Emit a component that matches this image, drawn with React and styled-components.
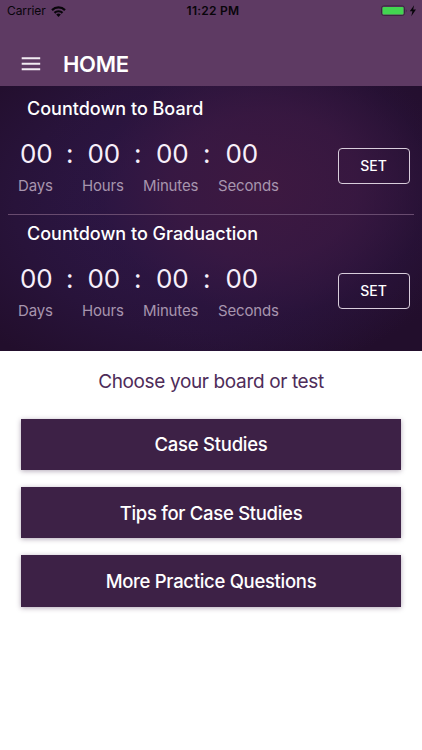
import styled, { createGlobalStyle } from "styled-components";

const units = ["Days", "Hours", "Minutes", "Seconds"];

function Countdown({ title }) {
  return (
    <CountdownBox>
      <CountdownTitle>{title}</CountdownTitle>
      <CountdownBody>
        <div>
          <Digits>
            <span>00</span>
            <Colon>:</Colon>
            <span>00</span>
            <Colon>:</Colon>
            <span>00</span>
            <Colon>:</Colon>
            <span>00</span>
          </Digits>
          <Labels>
            {units.map((unit) => (
              <span key={unit}>{unit}</span>
            ))}
          </Labels>
        </div>
        <SetButton>SET</SetButton>
      </CountdownBody>
    </CountdownBox>
  );
}

function App() {
  return (
    <>
      <GlobalStyle />
      <Container>
        <Header>
          <StatusBar>
            <Carrier>
              Carrier
              <svg width="15" height="11" viewBox="0 0 15 11">
                <g fill="none" stroke="#08050a" strokeWidth="2.2">
                  <path d="M1 4.1a9.3 9.3 0 0 1 13 0" />
                  <path d="M3.5 6.9a5.7 5.7 0 0 1 8 0" />
                </g>
                <path d="M5.2 8.6a3.3 3.3 0 0 1 4.6 0L7.5 10.9z" fill="#08050a" />
              </svg>
            </Carrier>
            <Time>11:22 PM</Time>
            <Battery>
              <svg width="36" height="12" viewBox="0 0 36 12">
                <rect x="0.5" y="0.9" width="23" height="9.6" rx="2.3" fill="none" stroke="#3c2541" />
                <rect x="1.5" y="1.9" width="21" height="7.6" rx="1" fill="#43d551" />
                <path d="M24.9 4q1.5 1.7 0 3.4z" fill="#3c2541" />
                <path d="M33.1 0.2L28.8 6.2h2.6l-1.1 5 4.7-6.6h-2.8z" fill="#08050a" />
              </svg>
            </Battery>
          </StatusBar>
          <NavBar>
            <MenuButton aria-label="menu">
              <svg width="20" height="14" viewBox="0 0 20 14" stroke="#f1ebf2" strokeWidth="1.9">
                <path d="M0.7 1.2h18.5M0.7 6.7h18.5M0.7 12.2h18.5" />
              </svg>
            </MenuButton>
            <PageTitle>HOME</PageTitle>
          </NavBar>
        </Header>
        <Timers>
          <Countdown title="Countdown to Board" />
          <DivisionLine />
          <Countdown title="Countdown to Graduaction" />
        </Timers>
        <Main>
          <Guide>Choose your board or test</Guide>
          <MenuItem $spacing="-0.25px">Case Studies</MenuItem>
          <MenuItem $spacing="-0.3px">Tips for Case Studies</MenuItem>
          <MenuItem $spacing="-0.3px">More Practice Questions</MenuItem>
        </Main>
      </Container>
    </>
  );
}

export default App;

/////////// styled-component

const GlobalStyle = createGlobalStyle`
  * {
    box-sizing: border-box;
  }
  body {
    margin: 0;
    background-color: white;
    font-family: Inter, "Liberation Sans", sans-serif;
  }
  button {
    font-family: inherit;
  }
`;

const Container = styled.div`
  display: flex;
  flex-direction: column;
  width: 422px;
  height: 750px;
  overflow: hidden;
  background-color: white;
`;

const Header = styled.header`
  height: 86px;
  background-color: #5e3a63;
`;

const StatusBar = styled.div`
  display: grid;
  grid-template-columns: 1fr auto 1fr;
  align-items: center;
  height: 22px;
  padding: 0 5px 0 7px;
  color: #08050a;
  font-size: 12px;
  line-height: 22px;
`;

const Carrier = styled.div`
  display: flex;
  align-items: center;
  gap: 5px;
  letter-spacing: -0.1px;
`;

const Time = styled.div`
  padding-left: 2px;
  font-weight: 600;
  letter-spacing: 0.25px;
`;

const Battery = styled.div`
  display: flex;
  justify-content: flex-end;
`;

const NavBar = styled.div`
  display: flex;
  align-items: center;
  height: 64px;
  padding: 19px 21px 0;
  gap: 22px;
`;

const MenuButton = styled.button`
  display: flex;
  padding: 0;
  border: none;
  background: none;
`;

const PageTitle = styled.h1`
  margin: 0;
  color: white;
  font-size: 22px;
  font-weight: 600;
  line-height: 26px;
  letter-spacing: -0.3px;
`;

const Timers = styled.section`
  height: 265px;
  background: radial-gradient(
      ellipse 230px 180px at 265px 100px,
      rgba(63, 25, 64, 0.9),
      rgba(61, 25, 66, 0.7) 40%,
      rgba(45, 20, 62, 0.3) 72%,
      rgba(35, 14, 45, 0) 100%
    ),
    radial-gradient(
      ellipse 270px 190px at 190px 120px,
      #2b1644 30%,
      #28133a 65%,
      #220e2c 100%
    );
`;

const CountdownBox = styled.div`
  height: 125px;
  padding-top: 11px;
`;

const CountdownTitle = styled.h2`
  margin: 0 0 0 27px;
  color: white;
  font-size: 18px;
  font-weight: 500;
  line-height: 24px;
`;

const CountdownBody = styled.div`
  display: flex;
  justify-content: space-between;
  padding: 16px 12px 0 18px;
`;

const Digits = styled.div`
  display: grid;
  grid-template-columns: 33px 34.5px 33px 35.5px 33px 36.5px 33px;
  padding-left: 2px;
  color: #f7effa;
  font-size: 26px;
  line-height: 34px;
  letter-spacing: -0.2px;
`;

const Colon = styled.span`
  padding-right: 1px;
  text-align: center;
`;

const Labels = styled.div`
  display: grid;
  grid-template-columns: 64px 61px 75px auto;
  padding-top: 4px;
  color: #a795ae;
  font-size: 15px;
  line-height: 22px;
  letter-spacing: -0.15px;
`;

const SetButton = styled.button`
  width: 72px;
  height: 36px;
  margin-top: 11px;
  padding: 0 1px 1px 0;
  border: 1px solid #d8cddb;
  border-radius: 4px;
  background: none;
  color: white;
  font-size: 14px;
  font-weight: 500;
`;

const DivisionLine = styled.div`
  height: 1px;
  margin: 3px 8px -4px;
  background-color: #684b6f;
`;

const Main = styled.main`
  display: flex;
  flex-direction: column;
  gap: 16.5px;
  padding: 18px 21px;
`;

const Guide = styled.p`
  margin: 0 0 7px;
  color: #4e2c59;
  font-size: 19px;
  line-height: 26px;
  letter-spacing: -0.36px;
  text-align: center;
`;

const MenuItem = styled.button`
  height: 51.7px;
  padding: 0;
  border: none;
  background-color: #3d2146;
  box-shadow: 0 1px 5px rgba(61, 33, 70, 0.4);
  color: white;
  font-size: 18.5px;
  font-weight: 500;
  letter-spacing: ${(props) => props.$spacing};
`;
